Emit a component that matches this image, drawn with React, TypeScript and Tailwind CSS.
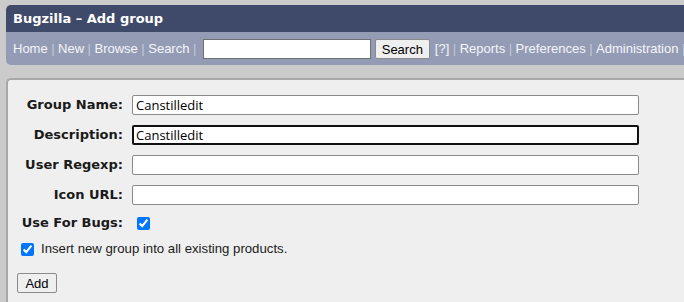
import React from "react";

const sep = <span className="mx-[3.5px] text-[#c3c8d8]">|</span>;

const Field = ({ label, value, focused }: { label: string; value?: string; focused?: boolean }) => (
  <div className="flex h-[30px] items-center">
    <div className="w-[106px] text-right font-['DejaVu_Sans',sans-serif] text-[13px] font-bold text-[#1a1a1a]">{label}</div>
    <input
      type="text"
      defaultValue={value}
      className={
        "ml-[9px] h-[20px] w-[507px] rounded-[2px] bg-white px-[3px] font-['Open_Sans',sans-serif] text-[13px] text-black outline-none " +
        (focused ? "border-2 border-[#111] pl-[2px]" : "border border-[#8a8a8a]")
      }
    />
  </div>
);

export default function App() {
  return (
    <div className="h-[302px] w-[684px] overflow-hidden bg-[#cbcbcb] pl-[6px] pt-[5px] font-['Liberation_Sans',Arial,sans-serif]">
      <div className="w-[700px] overflow-hidden rounded-l-[5px]">
        <div className="flex h-[27px] items-center bg-[#3f4a6a] pl-[7px] font-['DejaVu_Sans',sans-serif] text-[13px] font-bold text-white">
          Bugzilla – Add group
        </div>
        <div className="flex h-[33px] items-center bg-[#949cb5] pl-[7px] text-[13px] text-[#f4f6fb]">
          <span>Home</span>
          {sep}
          <span>New</span>
          {sep}
          <span>Browse</span>
          {sep}
          <span>Search</span>
          {sep}
          <input type="text" className="ml-[3px] h-[20px] w-[168px] border border-[#707070] bg-white outline-none" />
          <button className="ml-[4px] h-[20px] w-[55px] rounded-[2px] border border-[#8a8a8a] bg-[#efefef] text-[13px] text-black">
            Search
          </button>
          <span className="ml-[5px]">[?]</span>
          {sep}
          <span>Reports</span>
          {sep}
          <span>Preferences</span>
          {sep}
          <span>Administration</span>
          {sep}
        </div>
      </div>
      <div className="mt-[13px] h-[300px] w-[700px] rounded-tl-[5px] border-l-2 border-t-2 border-[#a8a8a8] bg-[#efefef] pl-[9px] pt-[10px]">
        <Field label="Group Name:" value="Canstilledit" />
        <Field label="Description:" value="Canstilledit" focused />
        <Field label="User Regexp:" />
        <Field label="Icon URL:" />
        <div className="flex h-[26px] items-center">
          <div className="w-[106px] text-right font-['DejaVu_Sans',sans-serif] text-[13px] font-bold text-[#1a1a1a]">Use For Bugs:</div>
          <input type="checkbox" defaultChecked className="ml-[14px] h-[13px] w-[13px] accent-[#0075ff]" />
        </div>
        <div className="flex h-[26px] items-center">
          <input type="checkbox" defaultChecked className="ml-[4px] h-[13px] w-[13px] accent-[#0075ff]" />
          <span className="ml-[7px] text-[13.2px] text-[#1a1a1a]">Insert new group into all existing products.</span>
        </div>
        <button className="mt-[11px] h-[20px] w-[40px] rounded-[2px] border border-[#8a8a8a] bg-[#efefef] text-[13px] text-black">
          Add
        </button>
      </div>
    </div>
  );
}
